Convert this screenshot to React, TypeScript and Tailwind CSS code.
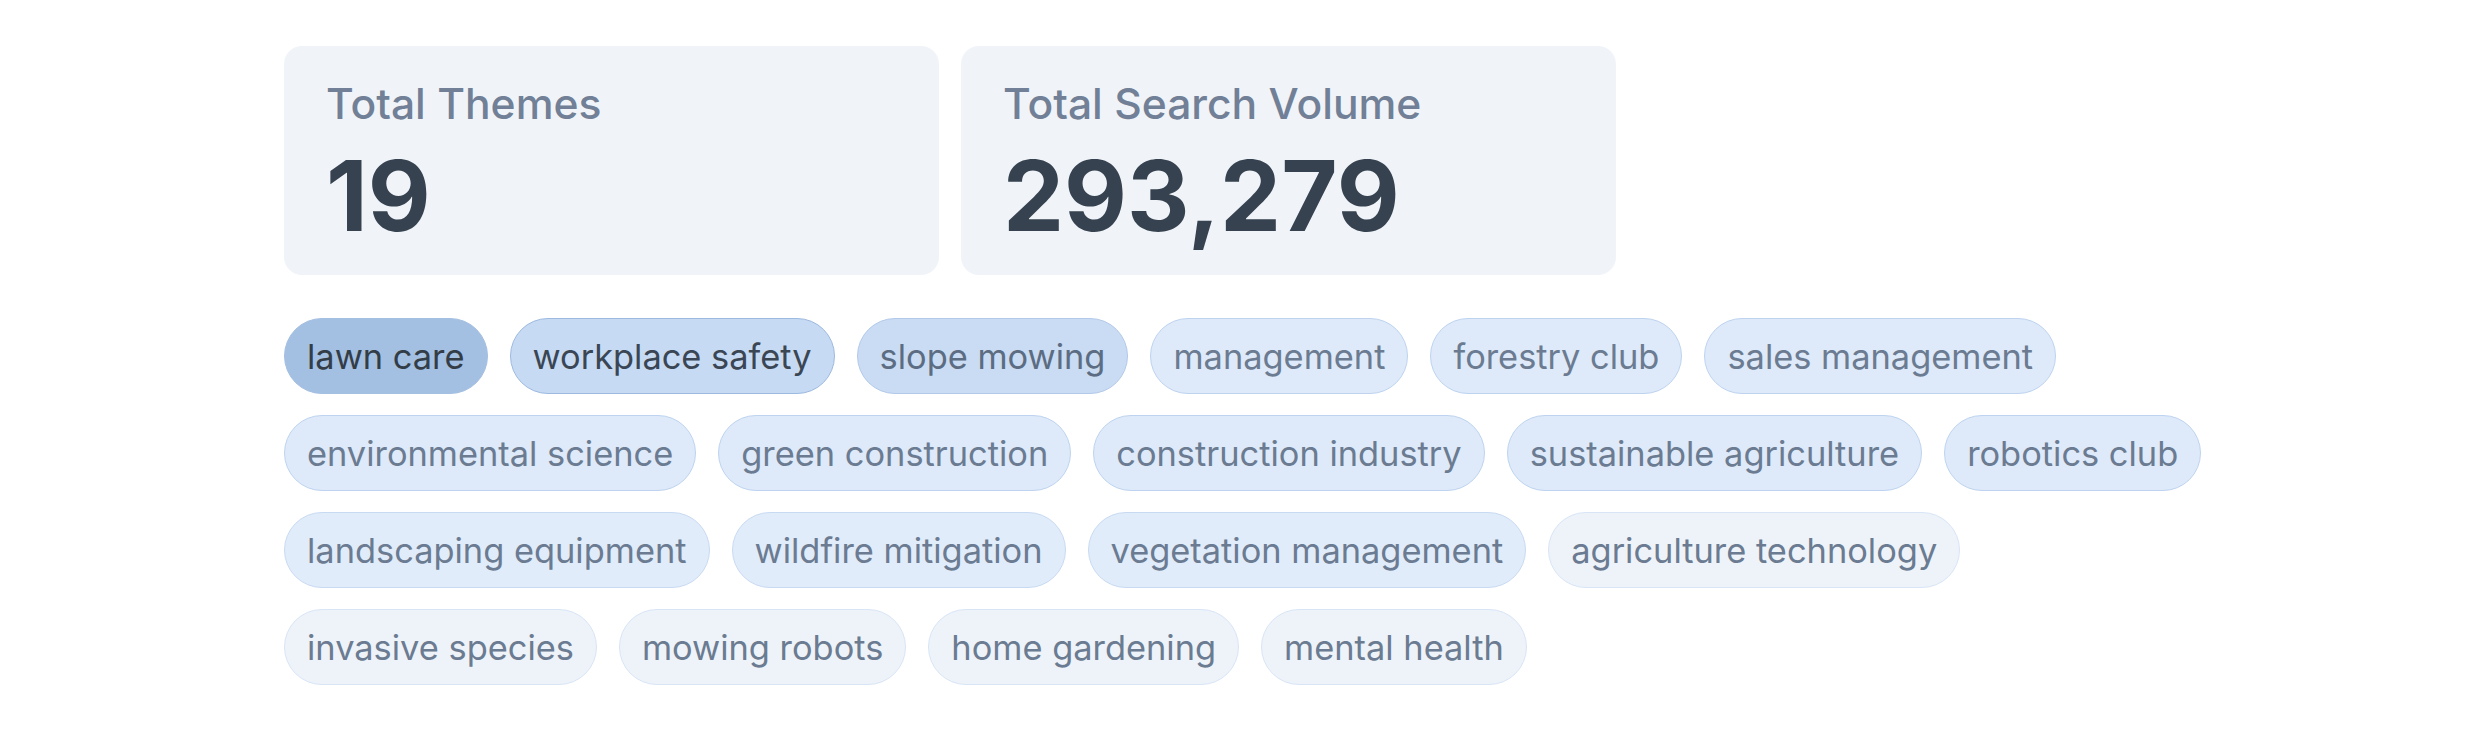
import React from "react";

type Theme = { label: string; tone: number };

const themes: Theme[] = [
  { label: "lawn care", tone: 0 },
  { label: "workplace safety", tone: 1 },
  { label: "slope mowing", tone: 2 },
  { label: "management", tone: 3 },
  { label: "forestry club", tone: 3 },
  { label: "sales management", tone: 3 },
  { label: "environmental science", tone: 3 },
  { label: "green construction", tone: 3 },
  { label: "construction industry", tone: 3 },
  { label: "sustainable agriculture", tone: 3 },
  { label: "robotics club", tone: 3 },
  { label: "landscaping equipment", tone: 4 },
  { label: "wildfire mitigation", tone: 4 },
  { label: "vegetation management", tone: 4 },
  { label: "agriculture technology", tone: 5 },
  { label: "invasive species", tone: 5 },
  { label: "mowing robots", tone: 5 },
  { label: "home gardening", tone: 5 },
  { label: "mental health", tone: 5 },
];

// colour steps, strongest first
const toneClasses = [
  "bg-[#a3bfe2] border-[#a3bfe2] text-[#333d48]",
  "bg-[#c6dbf3] border-[#9db9e0] text-[#3b4655]",
  "bg-[#c9dcf3] border-[#b2c9ea] text-[#5c6c82]",
  "bg-[#deeaf9] border-[#bdd3f0] text-[#6b7b91]",
  "bg-[#e1ecfa] border-[#c8daf2] text-[#6b7b91]",
  "bg-[#eef3f9] border-[#d8e5f6] text-[#6b7b91]",
];

const StatCard = ({ label, value }: { label: string; value: string }) => (
  <div className="w-[655px] h-[229px] rounded-[18px] bg-[#f0f4f9] pl-[42px] pt-[33px]">
    <div className="text-[42.6px] leading-[50px] font-medium text-[#718096]">{label}</div>
    <div className="mt-[18px] text-[97px] leading-[97px] font-bold text-[#36424f]">
      {value}
    </div>
  </div>
);

export default function App() {
  return (
    <div
      className="w-[2480px] h-[748px] bg-white pl-[284px] pt-[46px]"
      style={{ fontFamily: "Inter, 'Noto Sans', sans-serif" }}
    >
      <div className="flex gap-[22px]">
        <StatCard label="Total Themes" value="19" />
        <StatCard label="Total Search Volume" value="293,279" />
      </div>

      <div className="mt-[43px] w-[1960px] flex flex-wrap gap-x-[22px] gap-y-[21px]">
        {themes.map((t) => (
          <div
            key={t.label}
            className={`h-[76px] px-[22px] pt-[1px] flex items-center rounded-full border-[1.5px] text-[34.4px] ${toneClasses[t.tone]}`}
          >
            {t.label}
          </div>
        ))}
      </div>
    </div>
  );
}
